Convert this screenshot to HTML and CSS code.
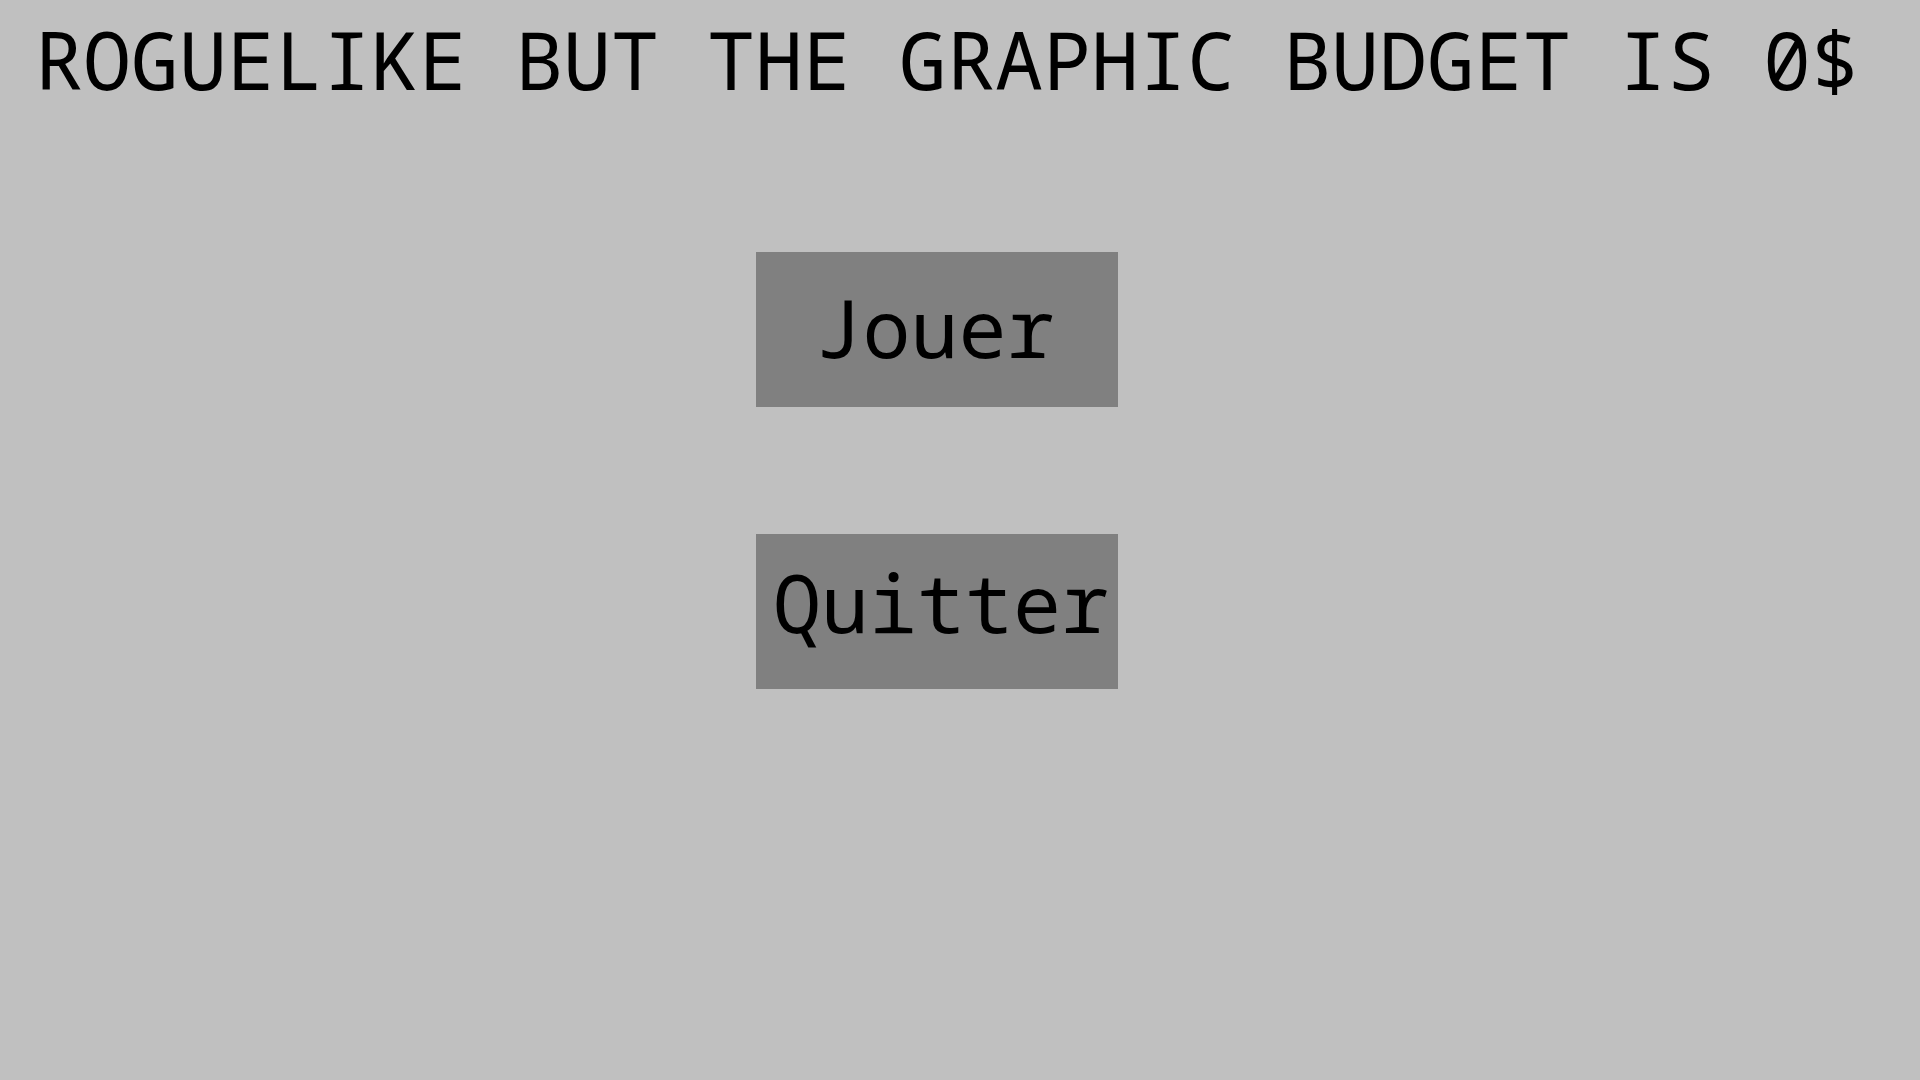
FILE: index.html
```html
<!DOCTYPE html>
<html>
<head>
<meta charset="utf-8">
<link rel="stylesheet" href="styles.css">
</head>
<body>
<h1 class="title">ROGUELIKE BUT THE GRAPHIC BUDGET IS 0$</h1>
<main class="menu">
  <div class="btn btn-play">Jouer</div>
  <div class="btn btn-quit">Quitter</div>
</main>
</body>
</html>
```
FILE: styles.css
```css
html, body {
  margin: 0;
  padding: 0;
  width: 1920px;
  height: 1080px;
  background: #c0c0c0;
  overflow: hidden;
  font-family: "Noto Sans Mono", "DejaVu Sans Mono", monospace;
  color: #000;
}
.title {
  margin: 4px 0 0 35px;
  font-size: 80px;
  font-weight: normal;
  line-height: normal;
  white-space: nowrap;
}
.menu {
  display: flex;
  flex-direction: column;
  align-items: flex-start;
  gap: 127px;
  padding-left: 756px;
  margin-top: 139px;
}
.btn {
  width: 362px;
  height: 155px;
  box-sizing: border-box;
  padding-bottom: 7px;
  background: #808080;
  font-size: 80px;
  line-height: normal;
  display: flex;
  align-items: center;
  justify-content: center;
}
.btn-play {
  padding-right: 5px;
}
.btn-quit {
  padding-bottom: 21px;
  padding-left: 8px;
}
```
